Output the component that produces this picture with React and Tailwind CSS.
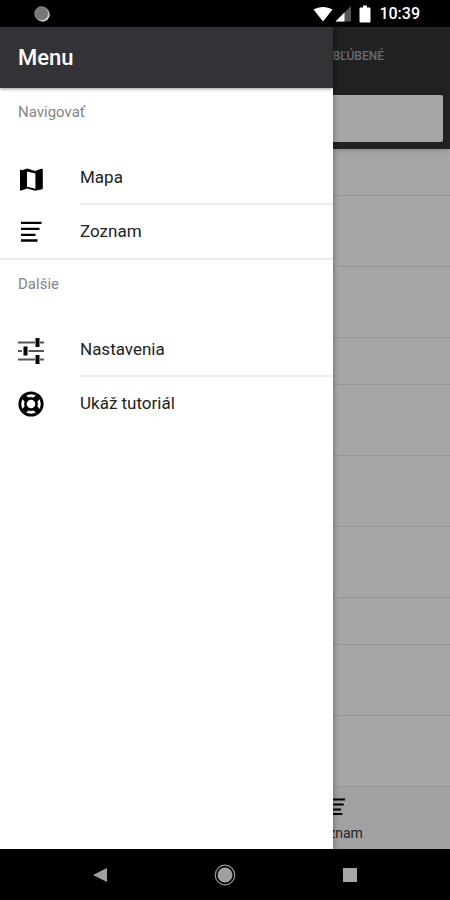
const FONT = "font-[Roboto,'Noto_Sans',sans-serif]";

function MapIcon() {
  return (
    <svg viewBox="0 0 24 24" className="size-6" aria-hidden="true">
      <path
        fillRule="evenodd"
        d="M1 3.200c0-.5.200-.700.700-.700L3 3.200l5.200-1.700 8 2.500 5.800-2.200c1.100-.300 1.800 0 1.800.900v18.500c0 .6-.3.900-.800 1l-6.800 1.500-8-2.300-5.700 2.200c-.900.300-1.500 0-1.500-.700V3.200ZM8 4.600v15.200l8.400 2V6.600L8 4.600Z"
      />
    </svg>
  );
}

function ListIcon({ className = 'size-6' }) {
  return (
    <svg viewBox="0 0 24 24" className={className} preserveAspectRatio="none" aria-hidden="true">
      <path d="M2 1.700h20.500v2.400H2zM2 7.700h18.500v2.400H2zM2 13.700h14.500v2.400H2zM2 19.300h16.500v2.400H2z" />
    </svg>
  );
}

function OptionsIcon() {
  return (
    <svg viewBox="0 0 28 28" className="size-7" aria-hidden="true">
      <path
        d="M1 5.500h17M23 5.500h4M1 14h4M11.500 14H27M1 22.500h17M23 22.500h4"
        stroke="#555"
        strokeWidth="1.800"
      />
      <path d="M18.500 1h4v9h-4zM6.500 9.500h4v9h-4zM18.500 18h4v9h-4z" />
    </svg>
  );
}

function HelpIcon() {
  return (
    <svg viewBox="0 0 28 28" className="size-7" fill="none" stroke="black" aria-hidden="true">
      <circle cx="14" cy="14" r="11.200" strokeWidth="2.800" />
      <circle cx="14" cy="14" r="5.600" strokeWidth="2.600" />
      <path d="m6.500 6.500 3.900 3.900M21.500 6.500l-3.900 3.900M6.500 21.500l3.900-3.900M21.500 21.500l-3.900-3.900" strokeWidth="5.500" />
    </svg>
  );
}

const sections = [
  {
    title: 'Navigovať',
    items: [
      { label: 'Mapa', Icon: MapIcon },
      { label: 'Zoznam', Icon: ListIcon },
    ],
  },
  {
    title: 'Dalšie',
    items: [
      { label: 'Nastavenia', Icon: OptionsIcon },
      { label: 'Ukáž tutoriál', Icon: HelpIcon },
    ],
  },
];

// group dividers are shorter than the rows that follow them
const rows = ['group', 'row', 'row', 'group', 'row', 'row', 'row', 'group', 'row', 'row'];

function StatusBar() {
  return (
    <div className="flex h-[27px] items-center bg-black pr-[30px] pl-[34px] text-white">
      <svg viewBox="0 0 16 16" className="size-4" aria-hidden="true">
        <circle cx="8.500" cy="8.500" r="7.200" fill="#ddd" />
        <circle cx="7.500" cy="7.500" r="6.800" fill="#777" stroke="#999" strokeWidth="0.800" />
      </svg>
      <svg viewBox="0 0 20 16" className="ml-auto h-4 w-5" fill="white" aria-hidden="true">
        <path d="M.5 3.500C6 0 14 0 19.500 3.500L10 15.500Z" />
      </svg>
      <svg viewBox="0 0 16 16" className="ml-[2px] size-4" aria-hidden="true">
        <path d="M16 0v15.500H.5Z" fill="#555" />
        <path d="M9.500 6.500v9H.5Z" fill="white" />
      </svg>
      <svg viewBox="0 0 12 18" className="ml-2 h-[18px] w-3" fill="white" aria-hidden="true">
        <path d="M4 .500h4v2h2.500c.5 0 1 .5 1 1v13c0 .5-.5 1-1 1h-9c-.5 0-1-.5-1-1v-13c0-.5.5-1 1-1H4z" />
      </svg>
      <span className="ml-2 text-base font-medium">10:39</span>
    </div>
  );
}

function ListPage() {
  return (
    <div className="flex flex-1 flex-col">
      <header className="flex h-[122px] flex-col bg-[#323336] shadow-md">
        <button type="button" className="mr-[66px] ml-auto h-[58px] text-xs font-medium text-[#a5a5a5]">
          OBĽÚBENÉ
        </button>
        <div className="px-[7px] pt-[10px]">
          <input
            type="search"
            aria-label="Hľadať"
            className="block h-[47px] w-full rounded-xs bg-white px-3 outline-none"
          />
        </div>
      </header>
      <ul className="flex-1">
        {rows.map((kind, i) => (
          <li
            key={i}
            className={`border-b border-[#e8e8e8] ${kind === 'group' ? 'h-[47px]' : 'h-[71px]'}`}
          />
        ))}
      </ul>
      <nav className="flex h-[62px] justify-end bg-[#f8f8f8]">
        <button type="button" className="flex w-1/2 flex-col items-center pt-[10px] text-sm text-[#333]">
          <ListIcon className="h-5 w-4" />
          <span className="mt-[6px]">Zoznam</span>
        </button>
      </nav>
    </div>
  );
}

function Drawer() {
  return (
    <aside className="absolute inset-y-0 left-0 w-[74%] bg-white shadow-[0_0_6px_rgba(0,0,0,0.4)]">
      <header className="flex h-[61px] items-center bg-[#323336] px-[18px] shadow-[0_1px_3px_rgba(0,0,0,0.4)]">
        <h1 className="text-[22px] font-medium text-white">Menu</h1>
      </header>
      {sections.map(({ title, items }) => (
        <section key={title} className="border-[#ececec] not-last:border-b-2">
          <h2 className="mb-4 flex h-12 items-center px-[18px] text-[15px] text-[#858585]">{title}</h2>
          <ul>
            {items.map(({ label, Icon }) => (
              <li key={label} className="group">
                <button type="button" className="flex h-[53px] w-full items-center pl-[17px] text-left">
                  <span className="flex w-7 justify-center">
                    <Icon />
                  </span>
                  <span className="ml-[35px] flex h-full flex-1 items-center border-[#ececec] text-[17px] text-[#222] group-not-last:border-b-2">
                    {label}
                  </span>
                </button>
              </li>
            ))}
          </ul>
        </section>
      ))}
    </aside>
  );
}

function SystemNav() {
  return (
    <nav className="flex h-[51px] items-center justify-between bg-black px-[88px]">
      <button type="button" aria-label="Späť" className="flex size-6 items-center justify-center">
        <svg viewBox="0 0 14 14" className="size-[14px]" fill="#a0a0a0">
          <path d="M14 0v14L0 7Z" />
        </svg>
      </button>
      <button type="button" aria-label="Domov" className="flex size-6 items-center justify-center">
        <svg viewBox="0 0 22 22" className="size-[22px]">
          <circle cx="11" cy="11" r="9.800" fill="none" stroke="#999" strokeWidth="1.200" />
          <circle cx="11" cy="11" r="7.500" fill="#a0a0a0" />
        </svg>
      </button>
      <button type="button" aria-label="Prehľad" className="flex size-6 items-center justify-center">
        <span className="size-[14px] bg-[#a6a6a6]" />
      </button>
    </nav>
  );
}

export default function App() {
  return (
    <div className={`flex min-h-screen flex-col bg-white ${FONT}`}>
      <StatusBar />
      <main className="relative flex flex-1 flex-col overflow-hidden">
        <ListPage />
        <div className="absolute inset-0 bg-black/35" />
        <Drawer />
      </main>
      <SystemNav />
    </div>
  );
}
